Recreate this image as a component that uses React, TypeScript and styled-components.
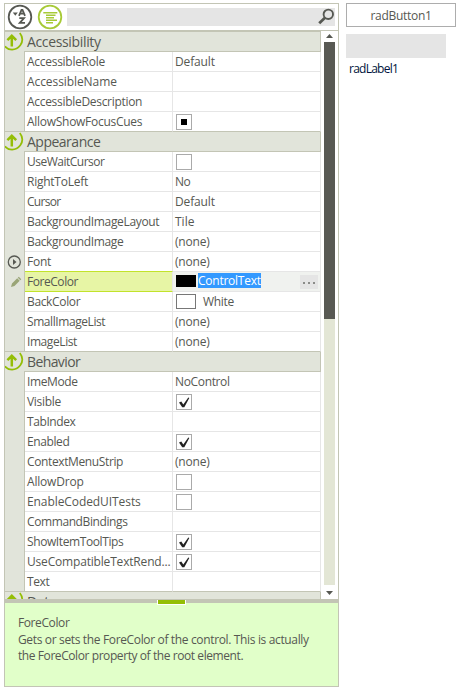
import React from 'react';
import styled, { createGlobalStyle } from 'styled-components';

const line = '#c3c5b5';
const groupFill = '#e1e4da';
const cellLine = '#e6e6e6';
const ink = '#565852';
const green = '#94be06';

const GlobalStyle = createGlobalStyle`
  * { box-sizing: border-box; }
  body { margin: 0; background: #fff; font-family: 'Open Sans', 'Noto Sans', sans-serif; font-size: 12px; color: ${ink}; overflow: hidden; }
  svg { display: block; flex: none; }
`;

const Page = styled.main`
  display: flex;
  width: 460px;
  height: 691px;
  padding: 3px 0 0 4px;
  gap: 7px;
`;

const Panel = styled.section`
  display: flex;
  flex-direction: column;
  width: 335px;
  height: 684px;
  border: 1px solid ${line};
`;

const Toolbar = styled.header`
  display: flex;
  flex: none;
  align-items: center;
  height: 27px;
  padding: 0 3px 0 2px;
  border-bottom: 1px solid ${line};
`;

const ToolIcon = styled.svg`
  width: 26px;
  height: 26px;
  margin-right: 4px;
`;

const SearchBox = styled.div`
  display: flex;
  flex: 1;
  justify-content: flex-end;
  height: 18px;
  background: #e5e5e5;
`;

const Body = styled.div`
  display: flex;
  flex: none;
  height: 568px;
  overflow: hidden;
`;

const Grid = styled.div`
  width: 316px;
  flex: none;
  border-top: 1px solid ${line};
`;

const GroupRow = styled.div`
  display: flex;
  height: 20px;
  background: ${groupFill};
  border-right: 1px solid ${line};
`;

const GroupGutter = styled.div`
  width: 19px;
  flex: none;
`;

const GroupTitle = styled.div<{ $spacing: number }>`
  flex: 1;
  padding-left: 3px;
  border-bottom: 1px solid ${line};
  font-size: 14px;
  line-height: 20px;
  letter-spacing: ${p => p.$spacing}px;
`;

const Row = styled.div`
  display: grid;
  grid-template-columns: 20px 148px 148px;
  height: 20px;
`;

const Gutter = styled.div<{ $last?: boolean }>`
  display: flex;
  align-items: center;
  background: ${groupFill};
  border-right: 1px solid ${line};
  border-bottom: ${p => (p.$last ? `1px solid ${line}` : 'none')};
`;

const Cell = styled.div<{ $last?: boolean; $active?: boolean; $above?: boolean; $spacing?: number }>`
  display: flex;
  align-items: center;
  min-width: 0;
  padding-left: 2px;
  white-space: nowrap;
  line-height: 19px;
  letter-spacing: ${p => p.$spacing ?? 0}px;
  background: ${p => (p.$active ? '#e7f5a5' : '#fff')};
  border-right: 1px solid ${cellLine};
  border-bottom: 1px solid ${p => (p.$last ? line : p.$active || p.$above ? '#c2e32b' : cellLine)};
`;

const ValueCell = styled(Cell)<{ $editing?: boolean }>`
  background: ${p => (p.$editing ? '#f0f2ef' : '#fff')};
  border-bottom-color: ${p => (p.$last ? line : cellLine)};
`;

const CheckBox = styled.span`
  display: flex;
  width: 16px;
  height: 16px;
  margin: 1px 0 0 1px;
  border: 1px solid #aaa;
  background: #fff;
`;

const Swatch = styled.span<{ $color: string; $border: string }>`
  width: 20px;
  height: 15px;
  margin-left: 1px;
  background: ${p => p.$color};
  border: 1px solid ${p => p.$border};
`;

const BlackSwatch = styled(Swatch)`
  height: 12px;
  margin-bottom: 1px;
`;

const SwatchLabel = styled.span`
  margin-left: 7px;
`;

const Selection = styled.span`
  height: 15px;
  margin: 0 0 2px 2px;
  line-height: 16px;
  color: #fff;
  background: #3399ff;
`;

const MoreButton = styled.span`
  display: flex;
  align-items: center;
  justify-content: center;
  gap: 3px;
  width: 18px;
  height: 14px;
  margin-left: auto;
  margin-right: 2px;
  background: #e5e5e5;
`;

const Dot = styled.i`
  width: 2px;
  height: 2px;
  margin-top: 2px;
  background: #8b8c89;
`;

const Scrollbar = styled.div`
  display: flex;
  flex-direction: column;
  align-items: center;
  width: 17px;
  padding-right: 1px;
`;

const ScrollTrack = styled.div`
  width: 11px;
  height: 543px;
  background: #e3e6d5;
`;

const ScrollThumb = styled.div`
  height: 277px;
  background: #585953;
`;

const ScrollArrow = styled.svg`
  width: 11px;
  height: 11px;
`;

const Splitter = styled.div`
  position: relative;
  display: flex;
  flex: none;
  justify-content: center;
  height: 4px;
  padding-top: 1px;
  background: ${line};
`;

const Handle = styled.div`
  width: 29px;
  height: 5px;
  flex: none;
  border: 1px solid #fff;
  border-top: 0;
  background: ${green};
`;

const Description = styled.footer`
  flex: 1;
  padding: 12px 12px 0 13px;
  line-height: 16px;
  background: #e1ffc9;
`;

const DescriptionTitle = styled.div`
  height: 17px;
  letter-spacing: -0.4px;
`;

const DescriptionLine = styled.div<{ $spacing: number }>`
  white-space: nowrap;
  letter-spacing: ${p => p.$spacing}px;
`;

const Side = styled.aside`
  display: flex;
  flex-direction: column;
  width: 110px;
`;

const Button = styled.button`
  height: 24px;
  padding: 1px 0 0 0;
  border: 1px solid #adadad;
  background: #fff;
  color: ${ink};
  font: inherit;
  letter-spacing: -0.3px;
`;

const TextField = styled.div`
  width: 100px;
  height: 24px;
  margin-top: 7px;
  background: #e5e5e5;
`;

const Label = styled.div`
  padding: 3px 0 0 3px;
  line-height: 16px;
  color: #00143c;
  letter-spacing: -0.75px;
`;

const Collapse = () => (
  <svg width="19" height="20" viewBox="0 0 19 20" fill="none" stroke={green}>
    <path d="M14.8 1c3 3.7 3.4 8.8.5 12.3-2 2.6-4.9 4.3-8.2 4.3-2.9 0-5.5-1.2-7.1-3.3" strokeWidth="1.8" />
    <path d="M6.8 14.6V4M2.4 8.2L6.8 3.8l4.4 4.4" strokeWidth="2.5" />
  </svg>
);

const SortIcon = () => (
  <ToolIcon viewBox="0 0 26 26" fill="none" stroke={ink}>
    <circle cx="13" cy="13" r="11.3" strokeWidth="1.8" />
    <path d="M12 11.8l2.5-6h1l2.5 6M13 9.7h4.2M12.3 14.2h4.7l-4.2 4.7h5.2" strokeWidth="1.8" />
    <path d="M5.8 8.5h5L8.3 11.7z" fill={ink} stroke="none" />
  </ToolIcon>
);

const CategoryIcon = () => (
  <ToolIcon viewBox="0 0 26 26" fill="none" stroke="#a7ca36">
    <circle cx="13" cy="13" r="11.3" strokeWidth="1.8" />
    <path d="M6.3 8.8h14M9 11.2h9.5M9 13.7h8M9 16.2h11M9 18.7h7" strokeWidth="1.6" />
  </ToolIcon>
);

const SearchIcon = () => (
  <svg width="18" height="18" viewBox="0 0 18 18" fill="none" stroke={ink}>
    <circle cx="11.3" cy="6.3" r="4.7" strokeWidth="1.9" />
    <path d="M8 9.8L2.2 15.3" strokeWidth="2.8" />
  </svg>
);

const ExpandIcon = () => (
  <svg width="17" height="16" viewBox="0 0 17 16">
    <circle cx="9.3" cy="8" r="6" fill="none" stroke={ink} strokeWidth="1.3" />
    <path d="M8 5l3.5 3L8 11z" fill={ink} />
  </svg>
);

const PencilIcon = () => (
  <svg width="18" height="16" viewBox="0 0 18 16" fill="#9aa577">
    <path d="M6 13l1-3.5 5.2-5.2 2.5 2.5L9.5 12zM12.8 3.7l1-1 2.5 2.5-1 1z" />
  </svg>
);

const Tick = () => (
  <svg width="14" height="14" viewBox="0 0 14 14" fill="#222">
    <path d="M2 7.4l2.3-.9 2 2.9 5-6.8 1 .5-5 9.1H5.2z" />
  </svg>
);

const Square = () => (
  <svg width="14" height="14" viewBox="0 0 14 14"><path d="M4 4h6v6H4z" fill="#000" /></svg>
);

type Value = string | boolean | null;
type Property = { name: string; value?: Value; spacing?: number; valueSpacing?: number };
type Group = { title: string; spacing: number; items: Property[] };

const groups: Group[] = [
  {
    title: 'Accessibility', spacing: -0.35, items: [
      { name: 'AccessibleRole', value: 'Default', spacing: -0.28, valueSpacing: -0.15 },
      { name: 'AccessibleName', spacing: -0.08 },
      { name: 'AccessibleDescription', spacing: -0.3 },
      { name: 'AllowShowFocusCues', value: null, spacing: -0.28 },
    ],
  },
  {
    title: 'Appearance', spacing: -0.5, items: [
      { name: 'UseWaitCursor', value: false, spacing: -0.5 },
      { name: 'RightToLeft', value: 'No', spacing: -0.25, valueSpacing: -0.5 },
      { name: 'Cursor', value: 'Default', spacing: -0.7, valueSpacing: -0.15 },
      { name: 'BackgroundImageLayout', value: 'Tile', spacing: -0.34 },
      { name: 'BackgroundImage', value: '(none)', spacing: -0.35, valueSpacing: -0.2 },
      { name: 'Font', value: '(none)', spacing: -0.25, valueSpacing: -0.2 },
      { name: 'ForeColor', value: 'ControlText', spacing: -0.45, valueSpacing: -0.25 },
      { name: 'BackColor', value: 'White', spacing: -0.35, valueSpacing: -0.3 },
      { name: 'SmallImageList', value: '(none)', spacing: -0.42, valueSpacing: -0.2 },
      { name: 'ImageList', value: '(none)', spacing: -0.42, valueSpacing: -0.2 },
    ],
  },
  {
    title: 'Behavior', spacing: -0.6, items: [
      { name: 'ImeMode', value: 'NoControl', spacing: -0.4, valueSpacing: -0.35 },
      { name: 'Visible', value: true, spacing: -0.28 },
      { name: 'TabIndex', spacing: -0.4 },
      { name: 'Enabled', value: true, spacing: -0.4 },
      { name: 'ContextMenuStrip', value: '(none)', spacing: -0.38, valueSpacing: -0.2 },
      { name: 'AllowDrop', value: false, spacing: -0.2 },
      { name: 'EnableCodedUITests', value: false, spacing: -0.08 },
      { name: 'CommandBindings', spacing: -0.4 },
      { name: 'ShowItemToolTips', value: true, spacing: -0.4 },
      { name: 'UseCompatibleTextRend...', value: true, spacing: -0.18 },
      { name: 'Text', spacing: -0.4 },
    ],
  },
  { title: 'Data', spacing: -0.4, items: [] },
];

const PropertyValue = ({ name, value }: Property) => {
  if (value === undefined) return null;
  if (typeof value !== 'string') {
    return <CheckBox>{value === null ? <Square /> : value && <Tick />}</CheckBox>;
  }
  if (name === 'ForeColor') {
    return (
      <>
        <BlackSwatch $color="#000" $border="#000" />
        <Selection>{value}</Selection>
        <MoreButton><Dot /><Dot /><Dot /></MoreButton>
      </>
    );
  }
  if (name === 'BackColor') {
    return (
      <>
        <Swatch $color="#fff" $border="#777" />
        <SwatchLabel>{value}</SwatchLabel>
      </>
    );
  }
  return <>{value}</>;
};

const PropertyRow = ({ item, last }: { item: Property; last: boolean }) => (
  <Row>
    <Gutter $last={last}>
      {item.name === 'Font' && <ExpandIcon />}
      {item.name === 'ForeColor' && <PencilIcon />}
    </Gutter>
    <Cell $last={last} $active={item.name === 'ForeColor'} $above={item.name === 'Font'} $spacing={item.spacing}>
      {item.name}
    </Cell>
    <ValueCell $last={last} $editing={item.name === 'ForeColor'} $spacing={item.valueSpacing}>
      <PropertyValue {...item} />
    </ValueCell>
  </Row>
);

export default function App() {
  return (
    <>
      <GlobalStyle />
      <Page>
        <Panel>
          <Toolbar>
            <SortIcon />
            <CategoryIcon />
            <SearchBox><SearchIcon /></SearchBox>
          </Toolbar>
          <Body>
            <Grid>
              {groups.map(group => (
                <React.Fragment key={group.title}>
                  <GroupRow>
                    <GroupGutter><Collapse /></GroupGutter>
                    <GroupTitle $spacing={group.spacing}>{group.title}</GroupTitle>
                  </GroupRow>
                  {group.items.map((item, i) => (
                    <PropertyRow key={item.name} item={item} last={i === group.items.length - 1} />
                  ))}
                </React.Fragment>
              ))}
            </Grid>
            <Scrollbar>
              <ScrollArrow viewBox="0 0 11 11"><path d="M2 7h7L5.5 3z" fill={ink} /></ScrollArrow>
              <ScrollTrack><ScrollThumb /></ScrollTrack>
              <ScrollArrow viewBox="0 0 11 11"><path d="M2 6h7l-3.5 4z" fill={ink} /></ScrollArrow>
            </Scrollbar>
          </Body>
          <Splitter><Handle /></Splitter>
          <Description>
            <DescriptionTitle>ForeColor</DescriptionTitle>
            <DescriptionLine $spacing={-0.35}>Gets or sets the ForeColor of the control. This is actually</DescriptionLine>
            <DescriptionLine $spacing={-0.42}>the ForeColor property of the root element.</DescriptionLine>
          </Description>
        </Panel>
        <Side>
          <Button>radButton1</Button>
          <TextField />
          <Label>radLabel1</Label>
        </Side>
      </Page>
    </>
  );
}
